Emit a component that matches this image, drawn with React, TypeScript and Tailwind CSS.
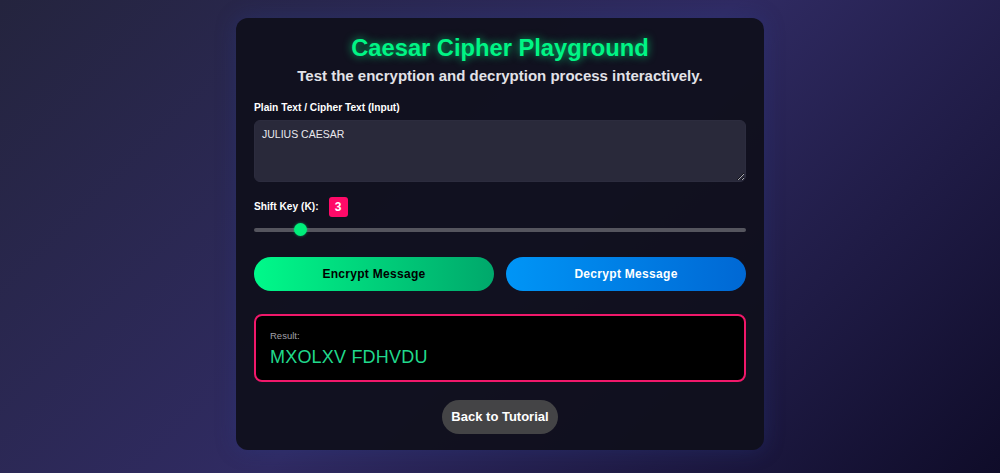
const font = { fontFamily: '"Liberation Sans", Arial, sans-serif' };

const Slider = ({ value, min, max }: { value: number; min: number; max: number }) => {
  const pct = (value - min) / (max - min);
  return (
    <div className="relative h-[13px] w-full">
      <div className="absolute left-0 right-0 top-[4.5px] h-[4px] rounded-full bg-[#55555e]" />
      <div
        className="absolute top-0 h-[13px] w-[13px] rounded-full bg-[#00ee7a] shadow-[0_0_3px_rgba(0,255,136,0.5)]"
        style={{ left: `calc(${pct} * (100% - 13px))` }}
      />
    </div>
  );
};

export default function App() {
  return (
    <div
      className="flex min-h-[473px] w-full justify-center bg-[linear-gradient(135deg,#24243e_0%,#302b63_50%,#0f0c29_100%)] pt-[18px]"
      style={font}
    >
      <div className="flex h-[432px] w-[528px] flex-col rounded-xl bg-[#10101c]/95 px-[18px] pt-[16px] shadow-[0_0_20px_rgba(40,60,140,0.35)]">
        <h1 className="text-center text-[23.7px] font-bold leading-[28px] text-[#00f585] [text-shadow:0_0_8px_rgba(0,255,136,0.7)]">
          Caesar Cipher Playground
        </h1>
        <p className="mt-[4px] text-center text-[15px] font-bold leading-[20px] text-[#e2e2e8]">
          Test the encryption and decryption process interactively.
        </p>

        <label className="mt-[15px] block text-[10.2px] font-bold leading-[14px] text-white">
          Plain Text / Cipher Text (Input)
        </label>
        <textarea
          className="mt-[5px] h-[62px] w-full resize-y rounded-md border border-[#2c2c3e] bg-[#29293a] px-[7px] py-[6px] text-[10.5px] leading-[14px] text-[#e8e8ee] outline-none"
          style={font}
          defaultValue="JULIUS CAESAR"
        />

        <div className="mt-[15px] flex items-center gap-[10px]">
          <span className="text-[10.2px] font-bold text-white">Shift Key (K):</span>
          <span className="flex h-[20px] w-[19px] items-center justify-center rounded-[3px] bg-[#ff0a68] text-[12px] font-bold text-white">
            3
          </span>
        </div>
        <div className="mt-[6px]">
          <Slider value={3} min={1} max={25} />
        </div>

        <div className="mt-[21px] flex gap-[12px]">
          <button className="h-[34px] flex-1 rounded-full bg-[linear-gradient(90deg,#00f98a,#00a86b)] text-[12px] font-bold tracking-[0.3px] text-black">
            Encrypt Message
          </button>
          <button className="h-[34px] flex-1 rounded-full bg-[linear-gradient(90deg,#0095f6,#0068d4)] text-[12px] font-bold tracking-[0.3px] text-white">
            Decrypt Message
          </button>
        </div>

        <div className="mt-[23px] h-[68px] rounded-lg border-2 border-[#f0186a] bg-black px-[14px] pt-[14px]">
          <div className="text-[9.5px] leading-[12px] text-[#a0a0a8]">Result:</div>
          <div className="mt-[3px] text-[18px] leading-[24px] tracking-[0.2px] text-[#20d98c]">
            MXOLXV FDHVDU
          </div>
        </div>

        <div className="mt-[18px] flex justify-center">
          <button className="h-[34px] w-[116px] rounded-full bg-[#444446] text-[13px] font-bold text-white">
            Back to Tutorial
          </button>
        </div>
      </div>
    </div>
  );
}
